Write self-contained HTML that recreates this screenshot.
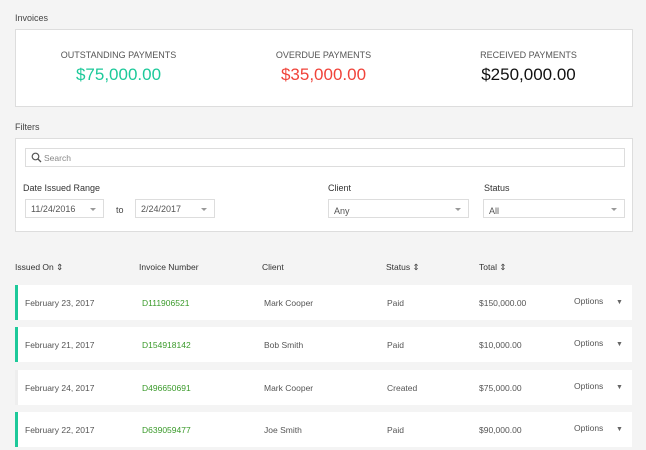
<!DOCTYPE html>
<html><head><style>
*{margin:0;padding:0;box-sizing:border-box}
body{width:646px;height:450px;background:#f4f4f4;font-family:"Liberation Sans",sans-serif;position:relative;overflow:hidden;color:#333}
.a{position:absolute;white-space:nowrap}
.card{position:absolute;background:#fff;border:1px solid #ddd}
.lbl{font-size:9px;color:#444}
.sel{position:absolute;background:#fff;border:1px solid #ddd;height:19px;font-size:9px;color:#555;padding:4px 0 0 5px}
.sel:after{content:"";position:absolute;right:7px;top:8px;border-left:3px solid transparent;border-right:3px solid transparent;border-top:3px solid #999}
.row{position:absolute;left:15px;width:617px;height:35px;background:#fff;font-size:8.5px;color:#555}
.row span{position:absolute;top:13px}
.row span.c{top:14px;font-size:7px;color:#666}
.g{border-left:3px solid #1dc99a}
.w{border-left:3px solid #eee}
.hd{position:absolute;top:262px;font-size:8.5px;color:#333}
</style></head><body>
<div class="a lbl" style="left:15px;top:13px">Invoices</div>
<div class="card" style="left:15px;top:29px;width:618px;height:78px">
<div class="a" style="left:0;width:205px;top:20px;text-align:center;font-size:9px;color:#555">OUTSTANDING PAYMENTS</div>
<div class="a" style="left:0;width:205px;top:35px;text-align:center;font-size:17px;color:#1dc99a">$75,000.00</div>
<div class="a" style="left:205px;width:205px;top:20px;text-align:center;font-size:9px;color:#555">OVERDUE PAYMENTS</div>
<div class="a" style="left:205px;width:205px;top:35px;text-align:center;font-size:17px;color:#f0433a">$35,000.00</div>
<div class="a" style="left:410px;width:205px;top:20px;text-align:center;font-size:9px;color:#555">RECEIVED PAYMENTS</div>
<div class="a" style="left:410px;width:205px;top:35px;text-align:center;font-size:17px;color:#111">$250,000.00</div>
</div>
<div class="a lbl" style="left:15px;top:122px">Filters</div>
<div class="card" style="left:15px;top:138px;width:618px;height:94px"></div>
<div class="a" style="left:25px;top:148px;width:600px;height:19px;border:1px solid #ddd;background:#fff">
<svg class="a" style="left:5px;top:3px" width="11" height="11" viewBox="0 0 11 11"><circle cx="4.5" cy="4.5" r="3.3" fill="none" stroke="#555" stroke-width="1.2"/><path d="M7 7l3 3" stroke="#555" stroke-width="1.3"/></svg>
<span class="a" style="left:18px;top:4px;font-size:8.5px;color:#888">Search</span></div>
<div class="a lbl" style="left:23px;top:183px;color:#333">Date Issued Range</div>
<div class="a lbl" style="left:328px;top:183px;color:#333">Client</div>
<div class="a lbl" style="left:484px;top:183px;color:#333">Status</div>
<div class="sel" style="left:25px;top:199px;width:79px">11/24/2016</div>
<div class="a lbl" style="left:116px;top:205px">to</div>
<div class="sel" style="left:135px;top:199px;width:80px">2/24/2017</div>
<div class="sel" style="left:328px;top:199px;width:141px;padding-top:6px">Any</div>
<div class="sel" style="left:483px;top:199px;width:142px;padding-top:6px">All</div>
<div class="hd" style="left:15px">Issued On ⇕</div>
<div class="hd" style="left:139px">Invoice Number</div>
<div class="hd" style="left:262px">Client</div>
<div class="hd" style="left:386px">Status ⇕</div>
<div class="hd" style="left:479px">Total ⇕</div>
<div class="row g" style="top:285px"><span style="left:7px">February 23, 2017</span><span style="left:124px;color:#3a9a2a">D111906521</span><span style="left:246px">Mark Cooper</span><span style="left:369px">Paid</span><span style="left:461px">$150,000.00</span><span style="left:556px;top:11px">Options</span><span class="c" style="left:598px">▼</span></div>
<div class="row g" style="top:327px"><span style="left:7px">February 21, 2017</span><span style="left:124px;color:#3a9a2a">D154918142</span><span style="left:246px">Bob Smith</span><span style="left:369px">Paid</span><span style="left:461px">$10,000.00</span><span style="left:556px;top:11px">Options</span><span class="c" style="left:598px">▼</span></div>
<div class="row w" style="top:370px"><span style="left:7px">February 24, 2017</span><span style="left:124px;color:#3a9a2a">D496650691</span><span style="left:246px">Mark Cooper</span><span style="left:369px">Created</span><span style="left:461px">$75,000.00</span><span style="left:556px;top:11px">Options</span><span class="c" style="left:598px">▼</span></div>
<div class="row g" style="top:412px"><span style="left:7px">February 22, 2017</span><span style="left:124px;color:#3a9a2a">D639059477</span><span style="left:246px">Joe Smith</span><span style="left:369px">Paid</span><span style="left:461px">$90,000.00</span><span style="left:556px;top:11px">Options</span><span class="c" style="left:598px">▼</span></div>
</body></html>
